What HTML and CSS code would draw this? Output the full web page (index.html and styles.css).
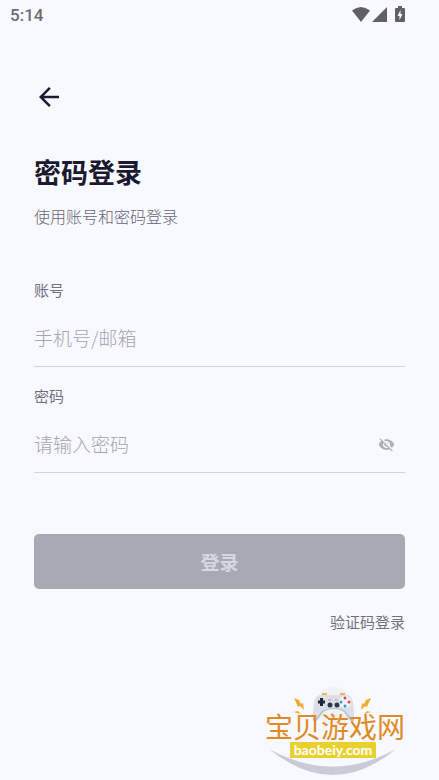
FILE: index.html
```html
<!DOCTYPE html>
<html lang="zh-CN">
  <head>
    <meta charset="UTF-8" />
    <meta name="viewport" content="width=device-width, initial-scale=1.0" />
    <title>密码登录</title>
    <link rel="stylesheet" href="styles.css">
  </head>
  <body>
    <header class="status-bar">
      <span class="time">5:14</span>
      <svg class="status-icons" width="56" height="18" viewBox="0 0 56 18" aria-hidden="true">
        <path d="M0 4.5Q9 -2.5 18 4.5L9 16Z" />
        <path d="M35 1V16H20Z" />
        <path fill-rule="evenodd" d="M46 0H50V2H52Q53 2 53 3V15Q53 16 52 16H44Q43 16 43 15V3Q43 2 44 2H46ZM48.5 4L45.500 10H47.5V14L50.500 8H48.5Z" />
      </svg>
    </header>

    <main class="login">
      <button class="back" type="button" aria-label="返回">
        <svg width="30" height="30" viewBox="0 0 24 24">
          <path d="M20 11H7.83l5.59-5.59L12 4l-8 8 8 8 1.41-1.41L7.83 13H20z" />
        </svg>
      </button>

      <h1 class="title">密码登录</h1>
      <p class="subtitle">使用账号和密码登录</p>

      <form class="login-form">
        <label class="label" for="account">账号</label>
        <div class="field">
          <input type="text" id="account" class="input" placeholder="手机号/邮箱" />
        </div>

        <label class="label" for="password">密码</label>
        <div class="field">
          <input type="password" id="password" class="input" placeholder="请输入密码" />
          <button class="toggle" type="button" aria-label="显示密码">
            <svg width="17" height="17" viewBox="0 0 24 24">
              <path d="M12 7c2.76 0 5 2.24 5 5 0 .65-.13 1.26-.36 1.83l2.92 2.92c1.51-1.26 2.7-2.89 3.43-4.75-1.73-4.39-6-7.5-11-7.5-1.4 0-2.74.25-3.98.7l2.16 2.16C10.74 7.13 11.35 7 12 7zM2 4.27l2.28 2.28.46.46C3.08 8.3 1.78 10.02 1 12c1.73 4.39 6 7.5 11 7.5 1.55 0 3.03-.3 4.38-.84l.42.42L19.73 22 21 20.73 3.27 3 2 4.27zM7.53 9.8l1.55 1.55c-.05.21-.08.43-.08.65 0 1.66 1.34 3 3 3 .22 0 .44-.03.65-.08l1.55 1.55c-.67.33-1.41.53-2.2.53-2.76 0-5-2.24-5-5 0-.79.2-1.53.53-2.2zm4.31-.78l3.15 3.15.02-.16c0-1.66-1.34-3-3-3l-.17.01z" />
            </svg>
          </button>
        </div>

        <button class="submit" type="submit" disabled>登录</button>
      </form>
      <a class="switch-link" href="#">验证码登录</a>
    </main>

    <footer class="brand">
      <svg width="174" height="96" viewBox="0 0 174 96" role="img" aria-label="宝贝游戏网 baobeiy.com">
        <circle cx="69" cy="22" r="19" fill="#f1f2f4" />
        <path d="M4 65Q68 117 131 65Q68 100 4 65Z" fill="#c9cbd8" />
        <!-- 手柄 -->
        <path d="M57 10H62M75 10H80" stroke="#edb54c" stroke-width="2" />
        <path d="M54 12Q50 13 49 21L48 36Q50 40 53 35L58 28Q62 25 69 25Q76 25 79 28L84 35Q88 40 89 36L88 21Q87 13 83 12Z" fill="#b7bbca" />
        <path d="M55 11Q50 12 49 20L48 34Q51 37 53 32L57 27Q62 24 69 24Q76 24 80 27L84 32Q88 37 89 34L88 20Q87 12 82 11Z" fill="#dcdee8" />
        <path d="M53 18H60M56.500 14V22" stroke="#17283c" stroke-width="3" />
        <g fill="#28384b">
          <circle cx="65" cy="21" r="2.500" />
          <circle cx="72" cy="21" r="2.500" />
        </g>
        <path d="M63 16H66M70 16H73" stroke="#e78b91" stroke-width="1" />
        <circle cx="80" cy="18" r="6" fill="#f3f4f8" />
        <g fill="#df4555">
          <circle cx="80" cy="14" r="1.500" />
          <circle cx="84" cy="18" r="1.500" />
        </g>
        <g fill="#329db5">
          <circle cx="76" cy="18" r="1.500" />
          <circle cx="80" cy="22" r="1.500" />
        </g>
        <!-- 闪电 -->
        <g fill="#f0ac2d">
          <path d="M29 14L34 16L36 20L38 19L39 26L35 22L33 23Z" />
          <path d="M29 28L33 27L36 30L32 29Z" />
          <path d="M106 14L101 16L99 20L97 19L96 26L100 22L102 23Z" />
          <path d="M106 28L102 27L99 30L103 29Z" />
        </g>
        <text class="brand-name" x="0" y="54">宝贝游戏网</text>
        <rect x="25" y="58" width="86" height="16" fill="#ead02f" />
        <text class="brand-domain" x="68" y="71" text-anchor="middle">baobeiy.com</text>
      </svg>
    </footer>
  </body>
</html>
```

FILE: styles.css
```css
* {
  box-sizing: border-box;
}

body {
  display: flex;
  flex-direction: column;
  min-height: 100vh;
  margin: 0;
  background: #f8f9ff;
  color: #1a1930;
  font-family: "Noto Sans CJK SC", sans-serif;
}

button {
  padding: 0;
  border: none;
  background: none;
  font-family: inherit;
}

svg {
  display: block;
}

.status-bar {
  display: flex;
  justify-content: space-between;
  align-items: center;
  height: 30px;
  padding: 0 31px 0 10px;
  color: #616165;
}

.time {
  color: #6c6c70;
  font-family: Roboto, sans-serif;
  font-size: 17px;
  font-weight: 500;
}

.status-icons {
  fill: currentColor;
}

.login {
  display: flex;
  flex-direction: column;
  padding: 52px 34px 0;
}

.back {
  align-self: flex-start;
  fill: #1a1930;
  cursor: pointer;
}

.title {
  margin: 44px 0 16px;
  font-size: 27px;
  font-weight: 700;
  line-height: 32px;
}

.subtitle {
  margin: 0 0 52px;
  color: #666673;
  font-size: 16px;
  font-weight: 300;
  line-height: 24px;
}

.login-form {
  display: flex;
  flex-direction: column;
}

.label {
  color: #71707f;
  font-size: 15px;
  line-height: 20px;
}

.field {
  display: flex;
  align-items: center;
  height: 57px;
  margin: 10px 0 19px;
  border-bottom: 1px solid #d3d4da;
}

.input {
  flex: 1;
  min-width: 0;
  padding: 0 0 2px;
  border: none;
  outline: none;
  background: transparent;
  color: #1a1930;
  font-family: inherit;
  font-size: 19px;
  font-weight: 300;
}

.input::placeholder {
  color: #a4a5af;
}

.toggle {
  margin-right: 10px;
  fill: #adaeb8;
  cursor: pointer;
}

.submit {
  height: 55px;
  margin-top: 42px;
  border-radius: 5px;
  background: #a9a9b5;
  color: #d6d7e0;
  font-size: 19px;
  font-weight: 700;
}

.switch-link {
  align-self: flex-end;
  margin-top: 23px;
  color: #71707f;
  font-size: 15px;
  line-height: 20px;
  text-decoration: none;
}

.brand {
  display: flex;
  justify-content: flex-end;
  margin-top: auto;
}

.brand-name {
  fill: #df8a24;
  font-family: "Liberation Sans", "Noto Sans CJK SC", sans-serif;
  font-size: 28px;
  font-weight: 400;
}

.brand-domain {
  fill: #fff;
  font-family: Lato, sans-serif;
  font-size: 14px;
  font-weight: 700;
}
```
